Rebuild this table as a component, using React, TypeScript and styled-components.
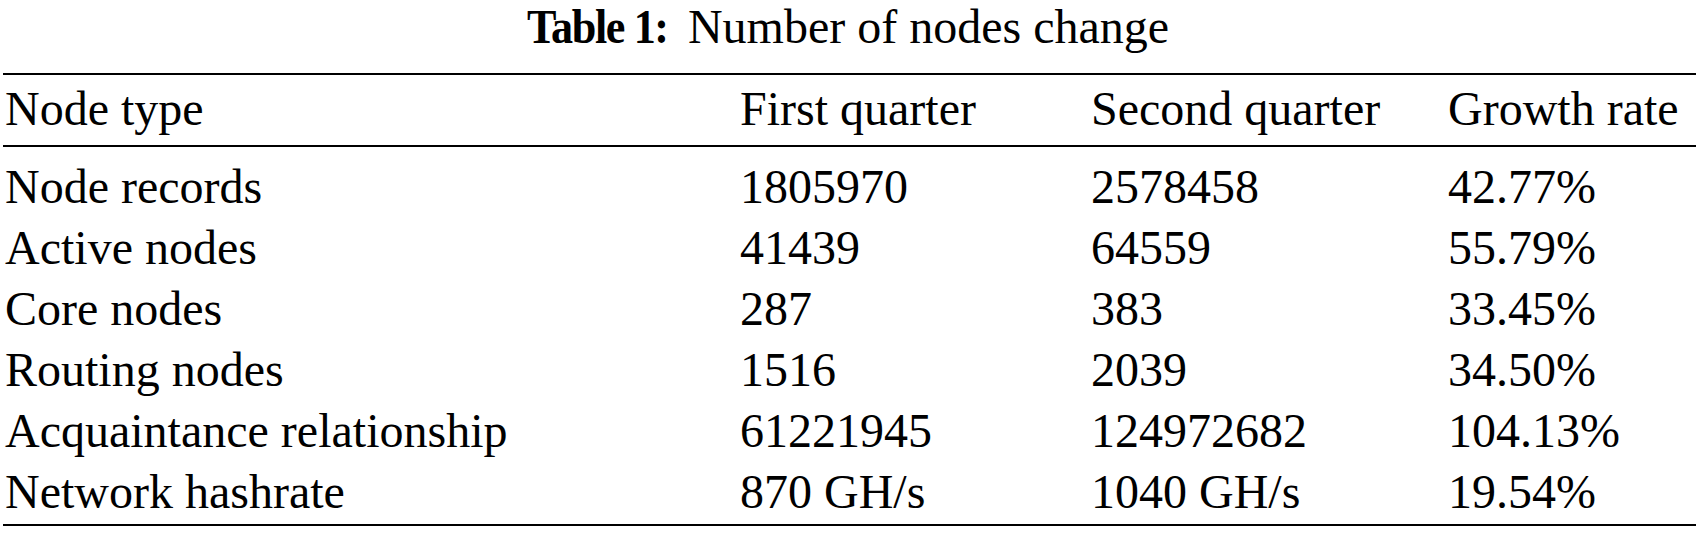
import React from 'react';
import styled, { createGlobalStyle } from 'styled-components';

interface Row {
  type: string;
  first: string;
  second: string;
  growth: string;
}

const rows: Row[] = [
  { type: 'Node records', first: '1805970', second: '2578458', growth: '42.77%' },
  { type: 'Active nodes', first: '41439', second: '64559', growth: '55.79%' },
  { type: 'Core nodes', first: '287', second: '383', growth: '33.45%' },
  { type: 'Routing nodes', first: '1516', second: '2039', growth: '34.50%' },
  { type: 'Acquaintance relationship', first: '61221945', second: '124972682', growth: '104.13%' },
  { type: 'Network hashrate', first: '870 GH/s', second: '1040 GH/s', growth: '19.54%' },
];

const GlobalStyle = createGlobalStyle`
  body { margin: 0; background: #fff; }
  html body #root,
  html body #root * {
    font-family: "Liberation Serif", "Times New Roman", Times, serif !important;
  }
`;

const Page = styled.div`
  width: 1696px;
  color: #000;
  font-family: "Liberation Serif", serif;
`;

const Caption = styled.div`
  text-align: center;
  font-family: "Liberation Serif", serif;
  font-size: 48px;
  line-height: 54px;
  white-space: nowrap;
`;

const CaptionLabel = styled.b`
  display: inline-block;
  letter-spacing: -1.5px;
  transform: scaleX(0.92);
  transform-origin: left center;
  margin-right: 8px;
`;

const Table = styled.div`
  margin-top: 19px;
  padding-left: 3px;
`;

const Section = styled.div<{ $rule?: 'top' | 'mid' | 'bottom' }>`
  border-top: 2px solid #000;
  border-bottom: ${p => (p.$rule === 'bottom' ? '2px solid #000' : 'none')};
`;

const Grid = styled.div<{ $rowHeight: number; $padTop: number; $padBottom: number }>`
  display: grid;
  grid-template-columns: 735px 351px 357px 1fr;
  grid-auto-rows: ${p => p.$rowHeight}px;
  padding-top: ${p => p.$padTop}px;
  padding-bottom: ${p => p.$padBottom}px;
  font-family: "Liberation Serif", serif;
  font-size: 48px;
  line-height: ${p => p.$rowHeight}px;
`;

const Cell = styled.div`
  padding-left: 2px;
`;

export default function App() {
  return (
    <Page>
      <GlobalStyle />
      <Caption>
        <CaptionLabel>Table 1:</CaptionLabel>Number of nodes change
      </Caption>
      <Table>
        <Section>
          <Grid $rowHeight={68} $padTop={0} $padBottom={2}>
            <Cell>Node type</Cell>
            <Cell>First quarter</Cell>
            <Cell>Second quarter</Cell>
            <Cell>Growth rate</Cell>
          </Grid>
        </Section>
        <Section $rule="bottom">
          <Grid $rowHeight={61} $padTop={9} $padBottom={2}>
            {rows.map(r => (
              <React.Fragment key={r.type}>
                <Cell>{r.type}</Cell>
                <Cell>{r.first}</Cell>
                <Cell>{r.second}</Cell>
                <Cell>{r.growth}</Cell>
              </React.Fragment>
            ))}
          </Grid>
        </Section>
      </Table>
    </Page>
  );
}
